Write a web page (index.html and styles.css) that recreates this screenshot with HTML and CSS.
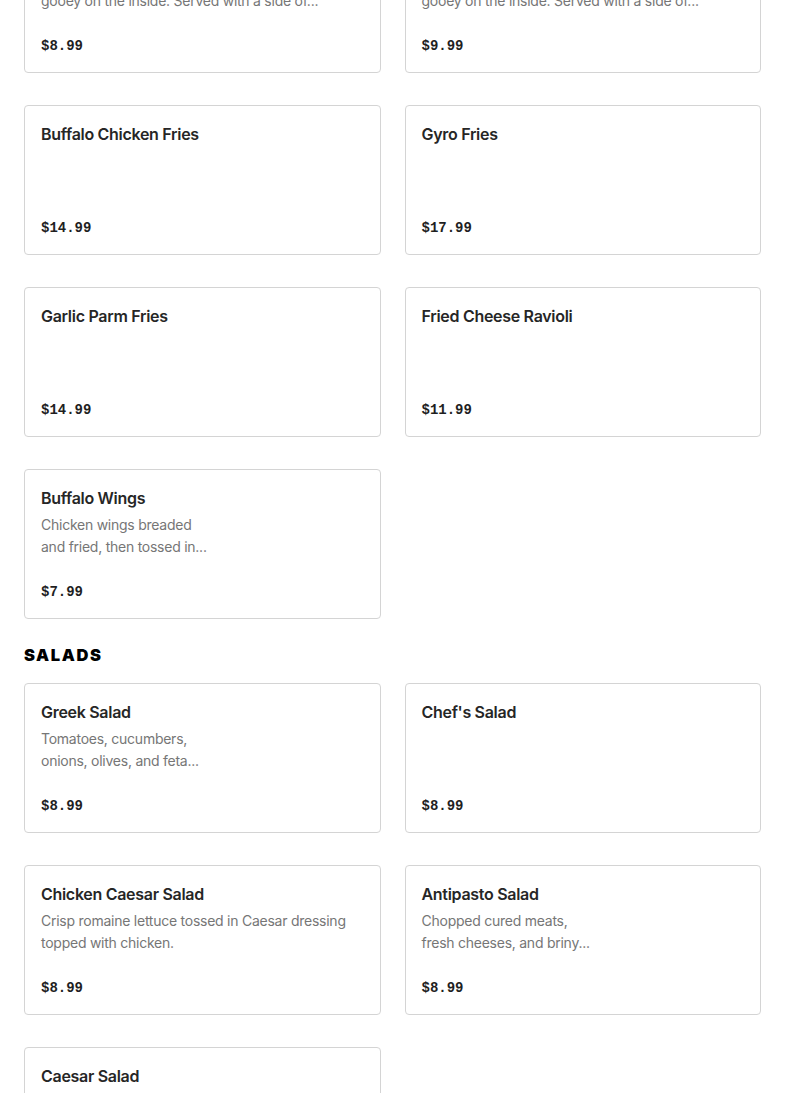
FILE: index.html
```html
<!DOCTYPE html>
<html lang="en">
<head>
<meta charset="utf-8">
<title>Menu</title>
<link rel="stylesheet" href="styles.css">
</head>
<body>
<main class="menu">
  <section class="section">
    <div class="grid">
      <article class="card">
        <h3 class="card-title">Mozzarella Sticks</h3>
        <p class="card-desc"><span>Breaded and fried, crispy on the outside and</span><span>gooey on the inside. Served with a side of...</span></p>
        <div class="card-price">$8.99</div>
      </article>
      <article class="card">
        <h3 class="card-title">Jalapeño Poppers</h3>
        <p class="card-desc"><span>Breaded and fried, crispy on the outside and</span><span>gooey on the inside. Served with a side of...</span></p>
        <div class="card-price">$9.99</div>
      </article>
      <article class="card">
        <h3 class="card-title">Buffalo Chicken Fries</h3>
        <div class="card-price">$14.99</div>
      </article>
      <article class="card">
        <h3 class="card-title">Gyro Fries</h3>
        <div class="card-price">$17.99</div>
      </article>
      <article class="card">
        <h3 class="card-title">Garlic Parm Fries</h3>
        <div class="card-price">$14.99</div>
      </article>
      <article class="card">
        <h3 class="card-title">Fried Cheese Ravioli</h3>
        <div class="card-price">$11.99</div>
      </article>
      <article class="card">
        <h3 class="card-title">Buffalo Wings</h3>
        <p class="card-desc"><span>Chicken wings breaded</span><span>and fried, then tossed in...</span></p>
        <div class="card-price">$7.99</div>
      </article>
    </div>
  </section>

  <section class="section">
    <h2 class="section-title">SALADS</h2>
    <div class="grid">
      <article class="card">
        <h3 class="card-title">Greek Salad</h3>
        <p class="card-desc"><span>Tomatoes, cucumbers,</span><span>onions, olives, and feta...</span></p>
        <div class="card-price">$8.99</div>
      </article>
      <article class="card">
        <h3 class="card-title">Chef's Salad</h3>
        <div class="card-price">$8.99</div>
      </article>
      <article class="card">
        <h3 class="card-title">Chicken Caesar Salad</h3>
        <p class="card-desc"><span>Crisp romaine lettuce tossed in Caesar dressing</span><span>topped with chicken.</span></p>
        <div class="card-price">$8.99</div>
      </article>
      <article class="card">
        <h3 class="card-title">Antipasto Salad</h3>
        <p class="card-desc"><span>Chopped cured meats,</span><span>fresh cheeses, and briny...</span></p>
        <div class="card-price">$8.99</div>
      </article>
      <article class="card">
        <h3 class="card-title">Caesar Salad</h3>
        <p class="card-desc"><span>Crisp romaine lettuce tossed in Caesar dressing</span><span>with croutons.</span></p>
        <div class="card-price">$7.99</div>
      </article>
    </div>
  </section>
</main>
</body>
</html>
```

FILE: styles.css
```css
* {
  box-sizing: border-box;
}

html, body {
  margin: 0;
  padding: 0;
  background: #ffffff;
}

body {
  font-family: Inter, "Noto Sans", "Liberation Sans", sans-serif;
  color: #262626;
  overflow: hidden;
}

.menu {
  padding: 0 24px;
  margin-top: -77px;
}

.section-title {
  margin: 24px 0 16px;
  font-size: 16.5px;
  line-height: 24px;
  font-weight: 900;
  letter-spacing: 1.6px;
  color: #000000;
}

.grid {
  display: grid;
  grid-template-columns: 1fr 1fr;
  column-gap: 24px;
  row-gap: 32px;
}

.card {
  display: flex;
  flex-direction: column;
  height: 150px;
  padding: 16px;
  border: 1px solid #d4d4d4;
  border-radius: 4px;
  background: #ffffff;
}

.card-title {
  margin: 0;
  font-size: 16px;
  line-height: 24px;
  font-weight: 600;
  letter-spacing: -0.3px;
  color: #262626;
}

.card-desc {
  margin: 4px 0 0;
  font-size: 14px;
  line-height: 22px;
  letter-spacing: -0.25px;
  color: #767676;
}

.card-desc span {
  display: block;
  white-space: nowrap;
}

.card-price {
  margin-top: auto;
  font-family: "Liberation Mono", "DejaVu Sans Mono", monospace;
  font-size: 14px;
  line-height: 20px;
  font-weight: 700;
  color: #1f1f1f;
}
```
